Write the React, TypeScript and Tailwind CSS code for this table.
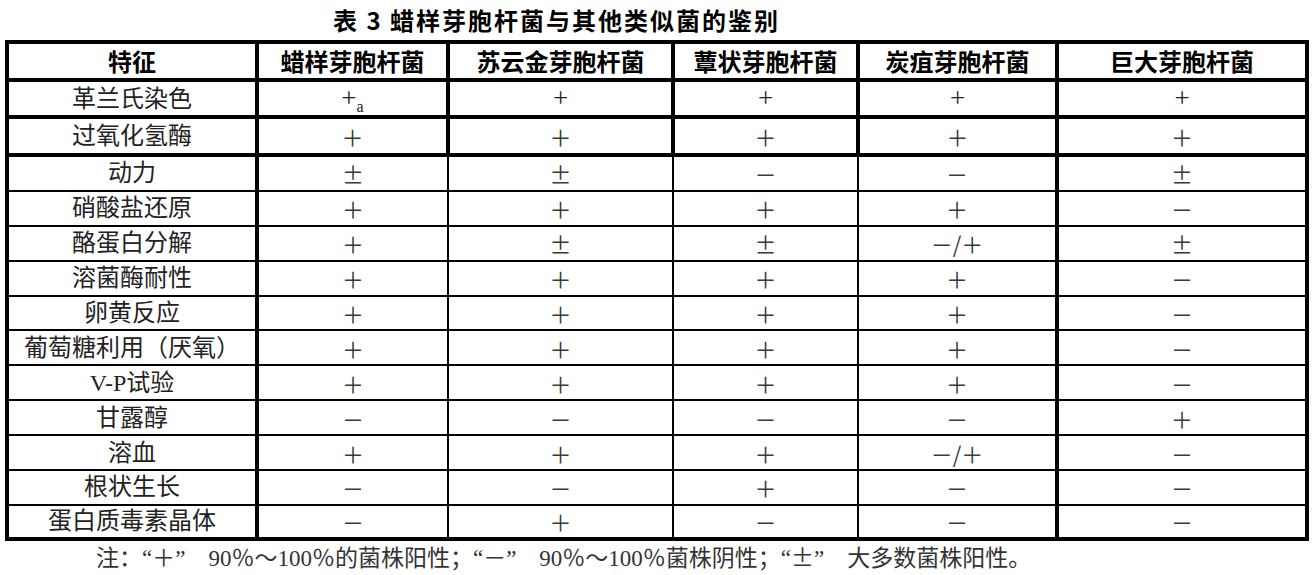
import React from "react";

type Row = { label: string; vals: string[] };

const rows: Row[] = [
  { label: "革兰氏染色", vals: ["+a", "+", "+", "+", "+"] },
  { label: "过氧化氢酶", vals: ["＋", "＋", "＋", "＋", "＋"] },
  { label: "动力", vals: ["±", "±", "－", "－", "±"] },
  { label: "硝酸盐还原", vals: ["＋", "＋", "＋", "＋", "－"] },
  { label: "酪蛋白分解", vals: ["＋", "±", "±", "－/＋", "±"] },
  { label: "溶菌酶耐性", vals: ["＋", "＋", "＋", "＋", "－"] },
  { label: "卵黄反应", vals: ["＋", "＋", "＋", "＋", "－"] },
  { label: "葡萄糖利用（厌氧）", vals: ["＋", "＋", "＋", "＋", "－"] },
  { label: "V-P试验", vals: ["＋", "＋", "＋", "＋", "－"] },
  { label: "甘露醇", vals: ["－", "－", "－", "－", "＋"] },
  { label: "溶血", vals: ["＋", "＋", "＋", "－/＋", "－"] },
  { label: "根状生长", vals: ["－", "－", "＋", "－", "－"] },
  { label: "蛋白质毒素晶体", vals: ["－", "＋", "－", "－", "－"] },
];

const headers = ["特征", "蜡样芽胞杆菌", "苏云金芽胞杆菌", "蕈状芽胞杆菌", "炭疽芽胞杆菌", "巨大芽胞杆菌"];

const thickCols = [
  "w-[250px] border-r-4",
  "w-[191px] border-r-4",
  "w-[225px] border-r-4",
  "w-[185px] border-r-4",
  "w-[199px] border-r-4",
  "w-[246px]",
];

const thinCols = [
  "w-[250px] border-r-4",
  "w-[190px] border-r-2",
  "w-[225px] border-r-2",
  "w-[185px] border-r-2",
  "w-[200px] border-r-4",
  "w-[246px]",
];

const serif = "font-['Liberation_Serif','Noto_Sans_CJK_SC',serif]";
const sym = "font-['Noto_Sans_CJK_SC','Liberation_Serif',serif]";

function Val({ v }: { v: string }) {
  if (v === "+a") {
    return (
      <span className={`${serif} text-[27px] text-[#222] leading-none`}>
        +<span className="text-[16px] relative top-[5px]">a</span>
      </span>
    );
  }
  if (v === "+") {
    return <span className={`${serif} text-[27px] text-[#222] leading-none`}>+</span>;
  }
  return <span className={`${sym} font-normal text-[22px] text-[#3a3a3a] leading-none`}>{v}</span>;
}

export default function App() {
  return (
    <div className="w-[1315px] h-[575px] overflow-hidden bg-white text-black antialiased">
      <div className="h-[40px] flex items-center pl-[333px]">
        <span className="font-['Noto_Sans_CJK_SC',sans-serif] font-bold text-[24px] tracking-[2px] text-black">
          表 3 蜡样芽胞杆菌与其他类似菌的鉴别
        </span>
      </div>

      <div className="ml-[5px] w-[1304px] border-4 border-black">
        <div className="flex h-[38px] border-b-4 border-black">
          {headers.map((h, i) => (
            <div
              key={h}
              className={`${thickCols[i]} border-black flex items-center justify-center font-['Noto_Sans_CJK_SC',sans-serif] font-bold text-[24px] text-black`}
            >
              {h}
            </div>
          ))}
        </div>
        {rows.map((r, ri) => {
          const top = ri < 2;
          const last = ri === rows.length - 1;
          const cols = top ? thickCols : thinCols;
          const h = ri === 0 ? "h-[37px] border-b-4" : ri === 1 ? "h-[38px] border-b-4" : last ? "h-[31px]" : "h-[34.9px] border-b-2";
          return (
            <div key={r.label} className={`flex ${h} border-black`}>
              <div className={`${cols[0]} border-black flex items-center justify-center ${serif} text-[24px] text-[#222]`}>
                {r.label}
              </div>
              {r.vals.map((v, vi) => (
                <div key={vi} className={`${cols[vi + 1]} border-black flex items-center justify-center`}>
                  <Val v={v} />
                </div>
              ))}
            </div>
          );
        })}
      </div>

      <div className="h-[34px] flex items-center pl-[96px]">
        <span className={`${serif} text-[23px] text-[#333] whitespace-pre`}>
          注：“＋”　90％～100％的菌株阳性；“－”　90％～100％菌株阴性；“<span className="font-['Noto_Sans_CJK_SC',serif]">±</span>”　大多数菌株阳性。
        </span>
      </div>
    </div>
  );
}
